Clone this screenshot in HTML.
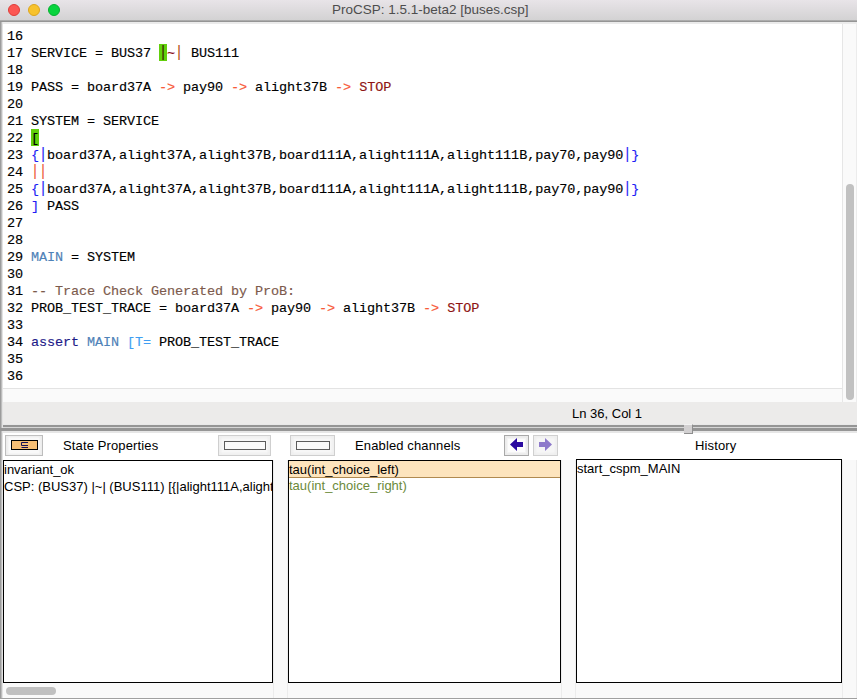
<!DOCTYPE html>
<html><head><meta charset="utf-8">
<style>
*{margin:0;padding:0;box-sizing:border-box}
html,body{width:857px;height:699px;overflow:hidden;background:#ececec}
body{position:relative;font-family:"Liberation Sans",sans-serif}
.a{position:absolute}
#title{left:0;top:0;width:857px;height:22px;background:linear-gradient(#e8e4e8 0,#d3d2d3 20px,#9c9c9c 20.7px,#8e8e8e 21.4px,#b8b8b8 22px)}
.tl{position:absolute;top:4px;width:12px;height:12px;border-radius:50%}
#ttxt{left:332px;top:2px;font-size:13.5px;color:#4d4d4d;white-space:nowrap}
#lborder{left:0;top:22px;width:3px;height:677px;background:linear-gradient(to right,#9c9c9c 0,#9c9c9c 1px,#bcbcbc 1px,#bcbcbc 2px,#e2e2e2 2px)}
#editor{left:2px;top:22px;width:855px;height:366px;background:#fff;border-top:2px solid #ebebeb}
#code{left:7px;top:28px;font-family:"Liberation Mono",monospace;font-size:13.5px;letter-spacing:-0.1px;line-height:17px;white-space:pre;color:#000;-webkit-text-stroke:0.15px}
.ln{height:17px}

.ar{color:#f85a3a}
.st{color:#8e1414}
.bl{color:#1e1ef5}
.mn{color:#4f82b8}
.as{color:#1c1a88}
.tt{color:#3f9ef2}
.cm{color:#7c5a4c}
.sal{color:#f0583a}
.br{display:inline-block;transform:translateY(-1px) scaleY(1.2)}
#hstrip{left:2px;top:388px;width:840px;height:14px;background:#fafafa;border-top:1px solid #e3e3e3}
#vtrack{left:842px;top:24px;width:15px;height:379px;background:#fafafa;border-left:1px solid #e6e6e6;border-right:1px solid #ececec}
#vthumb{left:846px;top:184px;width:8px;height:216px;background:#c1c1c1;border-radius:4px}
#status{left:2px;top:402px;width:855px;height:22px;background:#ecebea}
#stxt{left:572px;top:406px;font-size:13px;color:#000}
#div2{left:0;top:428px;width:4px;height:3px;background:#959595}
#div1{left:2px;top:424px;width:855px;height:9px;background:linear-gradient(#e8e8e8 0,#e8e8e8 1px,#959595 1px,#959595 3px,#d6d6d6 3px,#d6d6d6 4px,#959595 4px,#959595 7px,#e6e6e6 7px)}
#handle{z-index:5;left:684px;top:424px;width:9px;height:10px;background:#d2d0d1;border-right:1px solid #8e8e8e;border-bottom:1px solid #8e8e8e;border-top:1px solid #f2f2f2}
#lower{left:2px;top:433px;width:855px;height:266px;background:#fff}
.btn{position:absolute;top:435px;height:21px;background:#ececec;border:1px solid #c6c6c6}
.btn i{position:absolute;display:block}
.hd{position:absolute;top:438px;font-size:13px;letter-spacing:0.13px;color:#000;white-space:nowrap}
.box{position:absolute;top:460px;height:223px;background:#fff;border:1px solid #000;overflow:hidden}
.vs{position:absolute;top:460px;width:15px;height:238px;background:#f9f9f9;border-left:1px solid #ececec;border-right:1px solid #ececec}
.hs{position:absolute;top:683px;height:15px;background:#f9f9f9}
.it{position:absolute;left:1px;font-size:13px;white-space:nowrap;line-height:17px}
#bottom{left:0;top:698px;width:857px;height:1px;background:#a0a0a0}
</style></head><body>
<div id="title" class="a">
  <div class="tl" style="left:8px;background:#fc5753;border:1px solid #df3d39"></div>
  <div class="tl" style="left:28px;background:#f7c22c;border:1px solid #dda51c"></div>
  <div class="tl" style="left:48px;background:#08d43d;border:1px solid #05b030"></div>
</div>
<div id="ttxt" class="a">ProCSP: 1.5.1-beta2 [buses.csp]</div>
<div id="editor" class="a"></div>
<div class="a" style="left:159px;top:44px;width:8px;height:17px;background:#62cf0c"></div><div class="a" style="left:31px;top:129px;width:8px;height:17px;background:#62cf0c"></div><div id="code" class="a"><div class="ln">16</div><div class="ln">17 SERVICE = BUS37 <span class="br" style="color:#3a2008">|</span><span style="color:#8a1020">~</span><span class="br" style="color:#b34d12">|</span> BUS111</div><div class="ln">18</div><div class="ln">19 PASS = board37A <span class="ar">-&gt;</span> pay90 <span class="ar">-&gt;</span> alight37B <span class="ar">-&gt;</span> <span class="st">STOP</span></div><div class="ln">20</div><div class="ln">21 SYSTEM = SERVICE</div><div class="ln">22 <span class="g">[</span></div><div class="ln">23 <span class="bl">{<span class="br">|</span></span>board37A,alight37A,alight37B,board111A,alight111A,alight111B,pay70,pay90<span class="bl"><span class="br">|</span>}</span></div><div class="ln">24 <span class="sal"><span class="br">|</span><span class="br">|</span></span></div><div class="ln">25 <span class="bl">{<span class="br">|</span></span>board37A,alight37A,alight37B,board111A,alight111A,alight111B,pay70,pay90<span class="bl"><span class="br">|</span>}</span></div><div class="ln">26 <span class="bl">]</span> PASS</div><div class="ln">27</div><div class="ln">28</div><div class="ln">29 <span class="mn">MAIN</span> = SYSTEM</div><div class="ln">30</div><div class="ln">31 <span class="cm">-- Trace Check Generated by ProB:</span></div><div class="ln">32 PROB_TEST_TRACE = board37A <span class="ar">-&gt;</span> pay90 <span class="ar">-&gt;</span> alight37B <span class="ar">-&gt;</span> <span class="st">STOP</span></div><div class="ln">33</div><div class="ln">34 <span class="as">assert</span> <span class="mn">MAIN</span> <span class="tt">[T=</span> PROB_TEST_TRACE</div><div class="ln">35</div><div class="ln">36</div></div>
<div id="hstrip" class="a"></div>
<div id="vtrack" class="a"></div>
<div id="vthumb" class="a"></div>
<div id="status" class="a"></div>
<div id="stxt" class="a">Ln 36, Col 1</div>
<div id="div1" class="a"></div>
<div id="handle" class="a"></div>
<div id="lower" class="a"></div>

<!-- toolbar -->
<div class="btn" style="left:5px;width:38px;border-color:#bdbdbd"><i style="left:3px;top:2px;width:30px;height:15px;background:#f9f9f9;box-shadow:0 0 2px 1px #f9f9f9"></i><i style="left:5px;top:4px;width:27px;height:10px;background:#f7bf75;border:1px solid #000"></i><svg style="position:absolute;left:15px;top:6px" width="8" height="7" viewBox="0 0 8 7"><path d="M7 0.5 H0.5 V3.5 H7 M0.5 5.5 H7" fill="none" stroke="#161056" stroke-width="1"/></svg></div>
<div class="hd" style="left:63px">State Properties</div>
<div class="btn" style="left:218px;width:53px;background:#efefef;border-color:#cfcfcf"><i style="left:3px;top:3px;width:45px;height:13px;background:#f7f7f7;box-shadow:0 0 2px 1px #f7f7f7"></i><i style="left:5px;top:5px;width:42px;height:9px;background:#fafafa;border:1px solid #5c5c5c"></i></div>
<div class="btn" style="left:290px;width:45px;background:#efefef;border-color:#cfcfcf"><i style="left:3px;top:3px;width:37px;height:13px;background:#f7f7f7;box-shadow:0 0 2px 1px #f7f7f7"></i><i style="left:5px;top:5px;width:34px;height:9px;background:#fafafa;border:1px solid #5c5c5c"></i></div>
<div class="hd" style="left:355px">Enabled channels</div>
<div class="btn" style="left:504px;width:25px;border-color:#a9a9a9"><i style="left:3px;top:3px;width:17px;height:13px;background:#fcfcfc;box-shadow:0 0 1px 1px #f4f4f4"></i><svg style="position:absolute;left:5px;top:2px" width="14" height="14" viewBox="0 0 14 14"><path d="M0 6.5 L7 0 V4 H13 V9 H7 V13 Z" fill="#2a0aa0"/></svg></div>
<div class="btn" style="left:533px;width:25px;background:#efefef;border-color:#d0d0d0"><i style="left:3px;top:3px;width:17px;height:13px;background:#f6f6f6;box-shadow:0 0 2px 1px #f6f6f6"></i><svg style="position:absolute;left:5px;top:2px" width="14" height="14" viewBox="0 0 14 14"><path d="M13 6.5 L6 0 V4 H0 V9 H6 V13 Z" fill="#8e7acb"/></svg></div>
<div class="hd" style="left:695px">History</div>

<!-- panels -->
<div class="box" style="left:3px;width:270px"><div class="it" style="top:0;left:0;color:#000">invariant_ok</div><div class="it" style="top:17px;left:0;color:#000">CSP: (BUS37) |~| (BUS111) [{|alight111A,alight111B,pay70,pay90|}|| ...</div></div>
<div class="vs" style="left:273px"></div>
<div class="hs" style="left:3px;width:270px"><div class="a" style="left:3px;top:4px;width:50px;height:8px;background:#c0c0c0;border-radius:4px"></div></div>
<div class="box" style="left:288px;width:273px"><div class="a" style="left:0;top:0;width:271px;height:17px;background:#fde4bd;border-bottom:1px solid #b08a50"></div><div class="it" style="top:0;left:0;color:#000">tau(int_choice_left)</div><div class="it" style="top:16px;left:0;color:#6b8a3a">tau(int_choice_right)</div></div>
<div class="vs" style="left:561px"></div>
<div class="hs" style="left:288px;width:273px"></div>
<div class="box" style="left:576px;top:459px;height:224px;width:266px"><div class="it" style="top:0;left:0;color:#000">start_cspm_MAIN</div></div>
<div class="vs" style="left:842px"></div>
<div class="hs" style="left:576px;width:266px"></div>
<div id="lborder" class="a"></div><div id="div2" class="a"></div>
<div id="bottom" class="a"></div>
</body></html>
